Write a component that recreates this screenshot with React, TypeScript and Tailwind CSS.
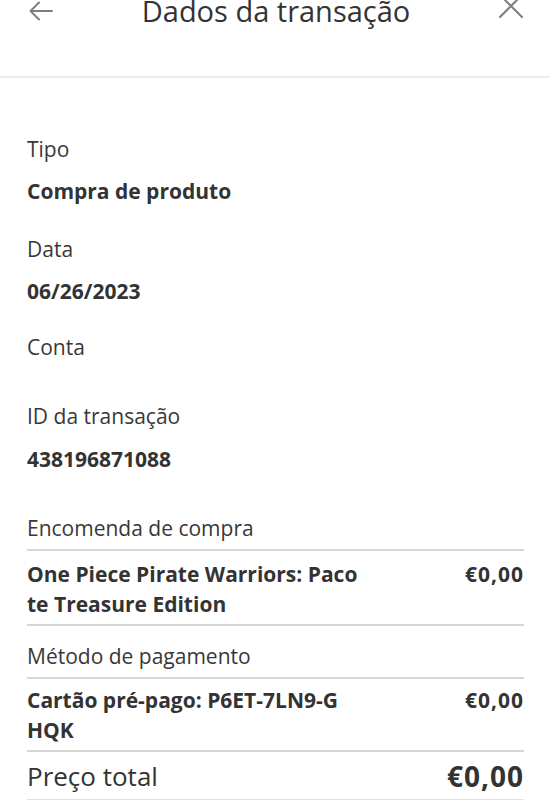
const font = { fontFamily: '"Open Sans", "Noto Sans", sans-serif' };

function Field({ label, value, className = "", gap = "mt-[12px]" }: { label: string; value?: string; className?: string; gap?: string }) {
  return (
    <div className={className}>
      <div className="text-[21px] leading-[30px] text-[#383838]">{label}</div>
      {value && <div className={`${gap} text-[21px] font-bold leading-[30px] text-[#333]`}>{value}</div>}
    </div>
  );
}

function LineItem({ lines, price, pad }: { lines: string[]; price: string; pad: string }) {
  return (
    <div className={`flex items-start justify-between ${pad}`}>
      <div className="text-[21px] font-bold leading-[30px] text-[#333]">
        {lines.map((l) => (
          <div key={l}>{l}</div>
        ))}
      </div>
      <div className="text-[21px] font-bold leading-[30px] tracking-[1px] text-[#333]">{price}</div>
    </div>
  );
}

export default function App() {
  return (
    <div className="h-[800px] w-[550px] overflow-hidden bg-white" style={font}>
      {/* Header */}
      <header className="flex h-[78px] flex-col border-b-2 border-[#ededed]">
        <div className="flex items-start justify-between pl-[29px] pr-[27px]">
          <svg className="mt-[1px] h-[20px] w-[24px]" viewBox="0 0 24 20" fill="none" stroke="#7d7d7d" strokeWidth="2" strokeLinecap="round" strokeLinejoin="round">
            <path d="M23 10H1.5M10 1.5L1.5 10L10 18.5" />
          </svg>
          <h1 className="-mt-[7px] text-[29px] leading-[36px] text-[#333]">Dados da transação</h1>
          <svg className="-mt-[6px] h-[24px] w-[24px]" viewBox="0 0 24 24" fill="none" stroke="#7d7d7d" strokeWidth="2" strokeLinecap="round">
            <path d="M1 1L23 23M23 1L1 23" />
          </svg>
        </div>
      </header>

      <main className="pl-[27px] pr-[26px] pt-[56px]">
        <Field label="Tipo" value="Compra de produto" />
        <Field label="Data" value="06/26/2023" className="mt-[28px]" />
        <Field label="Conta" className="mt-[26px]" />
        <Field label="ID da transação" value="438196871088" className="mt-[39px]" gap="mt-[13px]" />

        <div className="mt-[39px] text-[21px] leading-[30px] text-[#383838]">Encomenda de compra</div>
        <div className="mt-[6px] border-t-2 border-[#d6d6d6]" />
        <LineItem lines={["One Piece Pirate Warriors: Paco", "te Treasure Edition"]} price="€0,00" pad="pt-[8px] pb-[5px]" />
        <div className="border-t-2 border-[#d6d6d6]" />

        <div className="mt-[15px] text-[21px] leading-[30px] text-[#383838]">Método de pagamento</div>
        <div className="mt-[6px] border-t-2 border-[#d6d6d6]" />
        <LineItem lines={["Cartão pré-pago: P6ET-7LN9-G", "HQK"]} price="€0,00" pad="pt-[6px] pb-[5px]" />
        <div className="border-t-2 border-[#d6d6d6]" />

        <div className="flex items-center justify-between pb-[6px] pt-[7px]">
          <span className="text-[26px] leading-[34px] text-[#333]">Preço total</span>
          <span className="text-[28px] font-bold leading-[34px] tracking-[1px] text-[#333]">€0,00</span>
        </div>
        <div className="border-t border-[#e2e2e2]" />
      </main>
    </div>
  );
}
